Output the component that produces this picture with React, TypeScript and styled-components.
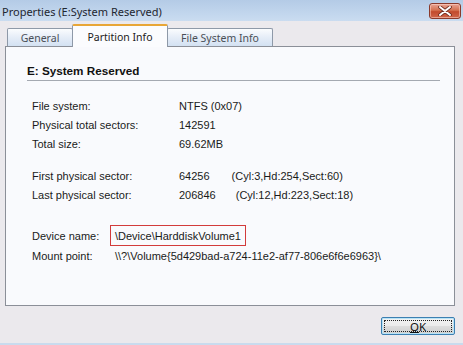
import styled, { createGlobalStyle } from 'styled-components';

const GlobalStyle = createGlobalStyle`
  html, body {
    margin: 0;
    padding: 0;
    background: #ebe9ed;
  }
`;

const tabs = [
  { name: 'General', width: 66 },
  { name: 'Partition Info', width: 96 },
  { name: 'File System Info', width: 106 },
];

const sizeRows = [
  { label: 'File system:', value: 'NTFS (0x07)' },
  { label: 'Physical total sectors:', value: '142591' },
  { label: 'Total size:', value: '69.62MB' },
];

const sectorRows = [
  { label: 'First physical sector:', value: '64256', chs: '(Cyl:3,Hd:254,Sect:60)', gap: 22 },
  { label: 'Last physical sector:', value: '206846', chs: '(Cyl:12,Hd:223,Sect:18)', gap: 20 },
];

function CloseGlyph() {
  return (
    <svg width="14" height="10" viewBox="0 0 14 10">
      <path
        d="M2 1 L12 9 M12 1 L2 9"
        stroke="#6b2a1e"
        strokeWidth="3.6"
        strokeLinecap="round"
      />
      <path
        d="M2 1 L12 9 M12 1 L2 9"
        stroke="#ffffff"
        strokeWidth="2"
        strokeLinecap="round"
      />
    </svg>
  );
}

export default function App() {
  return (
    <S.Window>
      <GlobalStyle />
      <S.TitleBar>
        <S.Caption>Properties (E:System Reserved)</S.Caption>
        <S.CloseButton>
          <CloseGlyph />
        </S.CloseButton>
      </S.TitleBar>

      <S.Body>
        <S.TabStrip>
          {tabs.map((t) => (
            <S.Tab key={t.name} $width={t.width} $active={t.name === 'Partition Info'}>
              {t.name}
            </S.Tab>
          ))}
        </S.TabStrip>

        <S.Panel>
          <S.Heading>E: System Reserved</S.Heading>

          <S.Group $top={15}>
            {sizeRows.map((r) => (
              <S.Row key={r.label}>
                <S.Label>{r.label}</S.Label>
                <S.Value>{r.value}</S.Value>
              </S.Row>
            ))}
          </S.Group>

          <S.Group $top={13}>
            {sectorRows.map((r) => (
              <S.Row key={r.label}>
                <S.Label>{r.label}</S.Label>
                <S.Value>{r.value}</S.Value>
                <S.Chs $gap={r.gap}>{r.chs}</S.Chs>
              </S.Row>
            ))}
          </S.Group>

          <S.Group $top={21}>
            <S.DeviceRow>
              <S.ShortLabel>Device name:</S.ShortLabel>
              <S.Highlight>\Device\HarddiskVolume1</S.Highlight>
            </S.DeviceRow>
            <S.Row>
              <S.ShortLabel>Mount point:</S.ShortLabel>
              <S.PathValue>{'\\\\?\\Volume{5d429bad-a724-11e2-af77-806e6f6e6963}\\'}</S.PathValue>
            </S.Row>
          </S.Group>
        </S.Panel>

        <S.Footer>
          <S.OkButton>
            <S.FocusRing>
              <u>O</u>K
            </S.FocusRing>
          </S.OkButton>
        </S.Footer>
      </S.Body>
      <S.BottomEdge />
    </S.Window>
  );
}

const S = {
  Window: styled.div`
    width: 463px;
    height: 345px;
    display: flex;
    flex-direction: column;
    background: #ebe9ed;
    overflow: hidden;
    font-family: 'Liberation Sans', Arial, sans-serif;
  `,
  TitleBar: styled.div`
    height: 21px;
    flex: none;
    display: flex;
    align-items: center;
    justify-content: space-between;
    padding: 0 2px 0 2px;
    background: linear-gradient(#b4cbe6, #c3d7ee 70%, #cadcf0);
  `,
  Caption: styled.span`
    font-family: 'Noto Sans', 'Open Sans', sans-serif;
    font-size: 11px;
    color: #1e2630;
    margin-top: 1px;
  `,
  CloseButton: styled.div`
    width: 30px;
    height: 14px;
    margin-top: 1px;
    display: flex;
    align-items: center;
    justify-content: center;
    border: 1px solid #8a3a2b;
    border-radius: 3px;
    background: linear-gradient(#e9a595, #d4704f 45%, #c24a2c 55%, #d0664a);
    box-shadow: inset 0 0 0 1px rgba(255, 220, 210, 0.5);
  `,
  Body: styled.div`
    flex: 1;
    display: flex;
    flex-direction: column;
    padding: 0 8px 0 5px;
  `,
  TabStrip: styled.div`
    height: 25px;
    display: flex;
    align-items: flex-end;
    padding-left: 2px;
    position: relative;
    z-index: 1;
  `,
  Tab: styled.div<{ $active?: boolean; $width: number }>`
    font-family: 'Noto Sans', 'Open Sans', sans-serif;
    font-size: 10.5px;
    box-sizing: border-box;
    width: ${(p) => p.$width}px;
    display: flex;
    align-items: center;
    justify-content: center;
    border: 1px solid #8e99a8;
    border-bottom: none;
    border-radius: 2px 2px 0 0;
    margin-left: -1px;
    color: ${(p) => (p.$active ? '#1b1b1b' : '#4a4f57')};
    height: ${(p) => (p.$active ? '23px' : '18px')};
    margin-bottom: ${(p) => (p.$active ? '-1px' : '0')};
    background: ${(p) =>
      p.$active ? '#fbfcfe' : 'linear-gradient(#fafcfe, #e7eef8 45%, #d3e1f2)'};
    border-top: ${(p) => (p.$active ? '2px solid #e8a637' : '1px solid #8e99a8')};
    &:first-child {
      margin-left: 0;
    }
  `,
  Panel: styled.div`
    height: 260px;
    box-sizing: border-box;
    border: 1px solid #8b8f98;
    background: #f9fafd;
    padding: 16px 14px 0 21px;
    font-size: 11px;
    color: #1a1a1a;
  `,
  Heading: styled.div`
    font-weight: bold;
    font-size: 11.7px;
    line-height: 16px;
    padding-bottom: 1px;
    border-bottom: 1px solid #a4a9b1;
    color: #111;
  `,
  Group: styled.div<{ $top: number }>`
    margin-top: ${(p) => p.$top}px;
    padding-left: 5px;
  `,
  Row: styled.div`
    display: flex;
    align-items: center;
    height: 19px;
  `,
  DeviceRow: styled.div`
    display: flex;
    align-items: center;
    height: 21px;
  `,
  Label: styled.span`
    width: 147px;
    flex: none;
  `,
  ShortLabel: styled.span`
    width: 78px;
    flex: none;
  `,
  Value: styled.span`
    min-width: 29px;
  `,
  Chs: styled.span<{ $gap: number }>`
    margin-left: ${(p) => p.$gap}px;
  `,
  Highlight: styled.span`
    box-sizing: border-box;
    height: 21px;
    display: flex;
    align-items: center;
    padding: 0 4px;
    border: 1px solid #d23b3b;
  `,
  PathValue: styled.span`
    padding-left: 5px;
  `,
  Footer: styled.div`
    display: flex;
    justify-content: flex-end;
    padding-top: 11px;
  `,
  OkButton: styled.div`
    box-sizing: border-box;
    width: 74px;
    height: 18px;
    padding: 2px;
    border: 1px solid #3c7fb1;
    border-radius: 2px;
    background: linear-gradient(#f2f2f2, #ebebeb 50%, #dddddd 51%, #cfcfcf);
    box-shadow: inset 0 0 0 1px #b8e3f7;
  `,
  FocusRing: styled.div`
    height: 100%;
    box-sizing: border-box;
    border: 1px dotted #222;
    display: flex;
    align-items: center;
    justify-content: center;
    font-family: 'Noto Sans', 'Open Sans', sans-serif;
    font-size: 11.5px;
    color: #111;
  `,
  BottomEdge: styled.div`
    height: 2px;
    margin-bottom: 0;
    background: #c9dbee;
  `,
};
